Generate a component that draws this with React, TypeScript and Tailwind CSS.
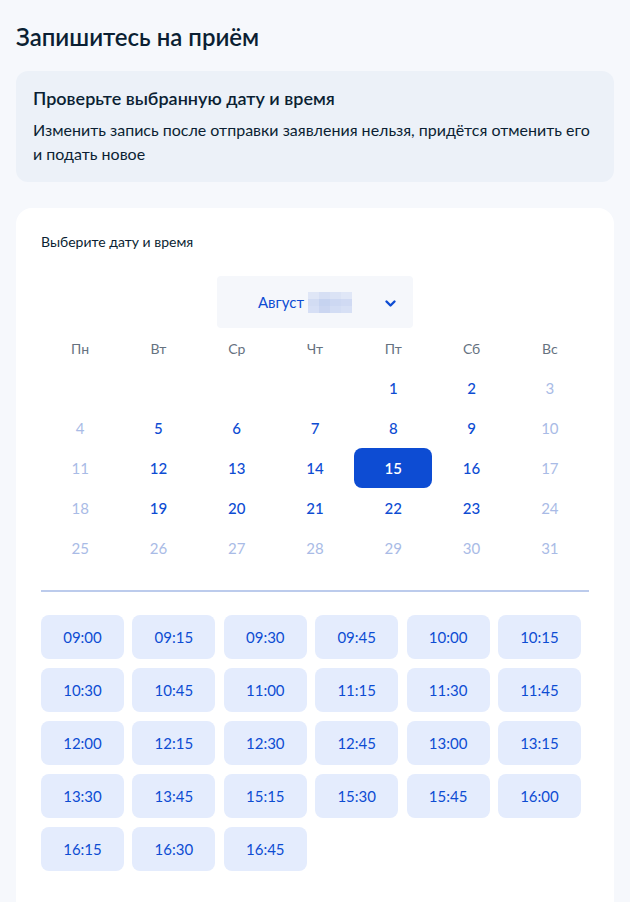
import * as React from "react"

const weekDays = ["Пн", "Вт", "Ср", "Чт", "Пт", "Сб", "Вс"]

// август: 1-е число в пятницу
const activeDays = [1, 2, 5, 6, 7, 8, 9, 12, 13, 14, 15, 16, 19, 20, 21, 22, 23]
const selectedDay = 15

const slots = [
    "09:00", "09:15", "09:30", "09:45", "10:00", "10:15",
    "10:30", "10:45", "11:00", "11:15", "11:30", "11:45",
    "12:00", "12:15", "12:30", "12:45", "13:00", "13:15",
    "13:30", "13:45", "15:15", "15:30", "15:45", "16:00",
    "16:15", "16:30", "16:45",
]

const blurCells = [
    "bg-[#dfe6f6]", "bg-[#d6dff4]", "bg-[#dbe3f5]", "bg-[#e0e7f7]",
    "bg-[#d2dcf3]", "bg-[#c6d3f0]", "bg-[#cdd8f2]", "bg-[#d0daf3]",
    "bg-[#d6dff5]", "bg-[#cbd6f1]", "bg-[#d3ddf4]", "bg-[#d7e0f5]",
]

function BlurredYear() {
    return (
        <div className="grid grid-cols-[repeat(4,11px)] grid-rows-[repeat(3,7px)] ml-1">
            {blurCells.map((c, i) => (
                <div key={i} className={c} />
            ))}
        </div>
    )
}

function Calendar() {
    const cells: (number | null)[] = [null, null, null, null]
    for (let d = 1; d <= 31; d++) cells.push(d)

    return (
        <div className="grid grid-cols-7">
            {weekDays.map((w) => (
                <div key={w} className="h-[40px] flex items-center justify-center text-[14px] text-[#66727f]">
                    {w}
                </div>
            ))}
            {cells.map((d, i) => {
                if (d === null) return <div key={i} className="h-[40px]" />
                if (d === selectedDay) {
                    return (
                        <div key={i} className="h-[40px] flex items-center justify-center rounded-[8px] bg-[#0d4cd3] text-white text-[15px] font-semibold">
                            {d}
                        </div>
                    )
                }
                const active = activeDays.includes(d)
                return (
                    <div
                        key={i}
                        className={
                            active
                                ? "h-[40px] flex items-center justify-center text-[15px] text-[#0d4cd3] font-medium"
                                : "h-[40px] flex items-center justify-center text-[15px] text-[#a9bbe6]"
                        }
                    >
                        {d}
                    </div>
                )
            })}
        </div>
    )
}

export default function App() {
    return (
        <div className="min-h-[902px] bg-[#f6f8fc] px-4 pt-[21px] font-['Lato','Noto_Sans',sans-serif] text-[#0b1f33]">
            <h1 className="text-[24px] leading-[32px] font-semibold mb-[18px]">Запишитесь на приём</h1>

            {/* Предупреждение */}
            <div className="rounded-[12px] bg-[#ecf1f8] px-[17px] pt-[15px] pb-[16px]">
                <div className="text-[18px] leading-[24px] font-semibold">Проверьте выбранную дату и время</div>
                <p className="mt-2 text-[16px] leading-[24px]">
                    Изменить запись после отправки заявления нельзя, придётся отменить его и подать новое
                </p>
            </div>

            {/* Календарь */}
            <div className="mt-[26px] rounded-t-[16px] bg-white px-[25px] pt-[24px] pb-[40px]">
                <div className="text-[14px] leading-[20px]">Выберите дату и время</div>

                <div className="mt-[24px] flex justify-center">
                    <div className="w-[196px] h-[52px] rounded-[4px] bg-[#f5f7fb] flex items-center pl-[41px] pr-[16px]">
                        <span className="text-[15px] text-[#0d4cd3]">Август</span>
                        <BlurredYear />
                        <svg className="ml-auto mt-[2px]" width="13" height="9" viewBox="0 0 13 9" fill="none">
                            <path d="M2.5 2.5l4 4 4-4" stroke="#0d4cd3" strokeWidth="2.4" strokeLinecap="round" strokeLinejoin="round" />
                        </svg>
                    </div>
                </div>

                <Calendar />

                <div className="mt-[22px] h-[2px] bg-[#bccbec]" />

                <div className="mt-[23px] grid grid-cols-[repeat(6,83px)] gap-x-[8.4px] gap-y-[9px]">
                    {slots.map((s) => (
                        <div key={s} className="h-[44px] rounded-[8px] bg-[#e4ecfd] flex items-center justify-center text-[15px] text-[#0d4cd3]">
                            {s}
                        </div>
                    ))}
                </div>
            </div>
        </div>
    )
}
